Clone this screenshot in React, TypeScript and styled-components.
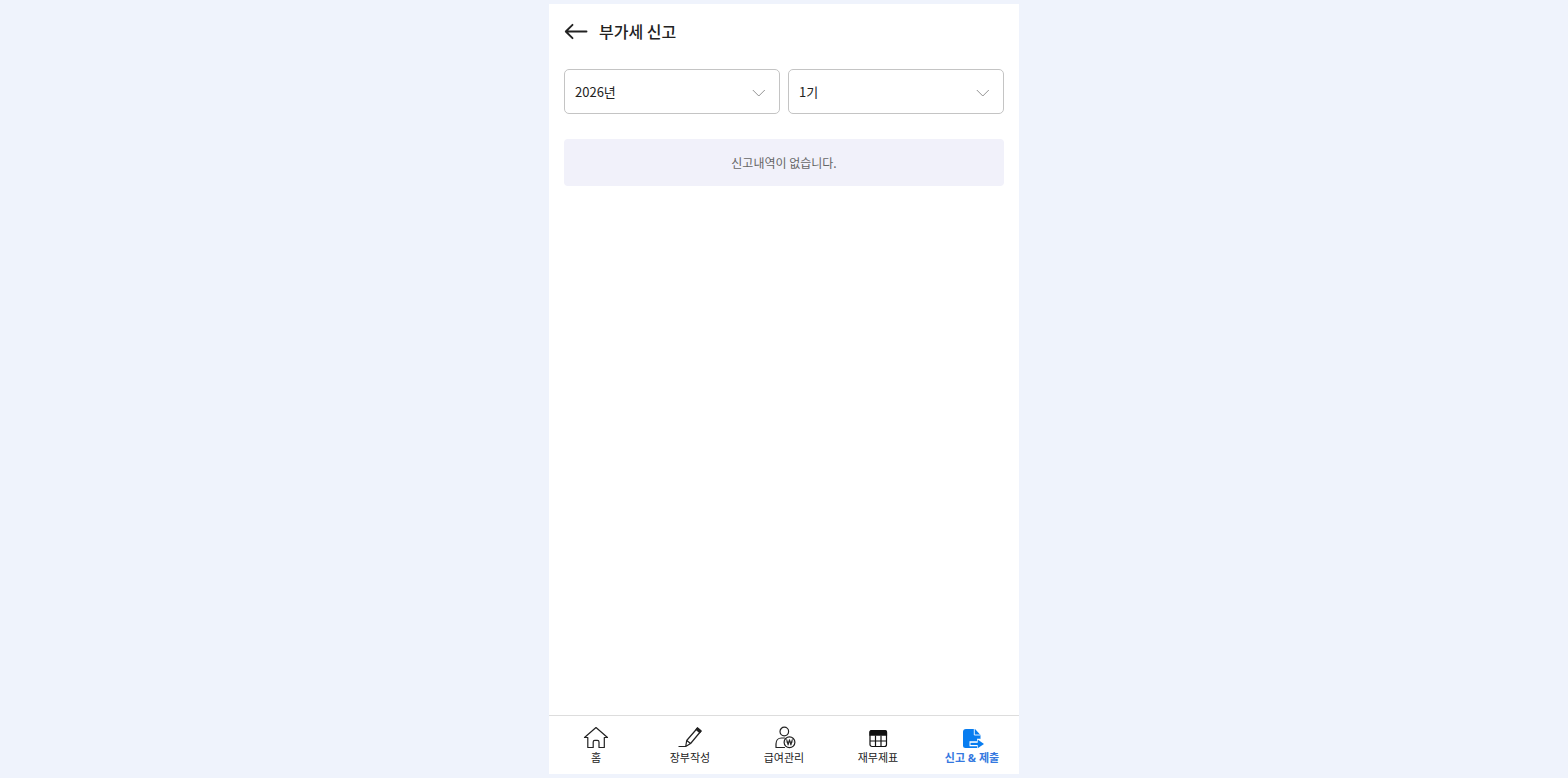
import React, { useState } from "react";
import styled, { createGlobalStyle, css } from "styled-components";

const GlobalStyle = createGlobalStyle`
  *, *::before, *::after { box-sizing: border-box; }
  body {
    margin: 0;
    background: #eff3fc;
    color: #222;
    font-family: "Noto Sans CJK KR", "Noto Sans", sans-serif;
    font-size: 13px;
  }
`;

const Page = styled.div`
  display: flex;
  flex-direction: column;
  min-height: 100vh;
  padding: 4px 0;
`;

const Phone = styled.div`
  display: flex;
  flex: 1;
  flex-direction: column;
  width: 100%;
  max-width: 470px;
  margin: 0 auto;
  background: #fff;
`;

const Header = styled.header`
  display: flex;
  align-items: center;
  gap: 10px;
  height: 54px;
  padding: 0 15px;
`;

const BackButton = styled.button`
  display: flex;
  padding: 0;
  border: 0;
  background: none;
  color: #222;
  cursor: pointer;
`;

const Title = styled.h1`
  margin: 0;
  font-size: 16px;
  font-weight: 500;
  line-height: 24px;
`;

const Content = styled.main`
  flex: 1;
  padding: 11px 15px;
`;

const Filters = styled.div`
  display: flex;
  gap: 8px;
`;

const Field = styled.div`
  display: grid;
  flex: 1;
  align-items: center;

  > * { grid-area: 1 / 1; }

  > svg {
    justify-self: end;
    margin-right: 14px;
    pointer-events: none;
  }
`;

const Select = styled.select`
  appearance: none;
  width: 100%;
  height: 45px;
  padding: 0 10px;
  border: 1px solid #c4c4c4;
  border-radius: 5px;
  background: #fff;
  color: #222;
  font: inherit;
`;

const EmptyMessage = styled.p`
  margin: 25px 0 0;
  padding: 14px;
  border-radius: 4px;
  background: #f1f1fa;
  color: #666;
  font-size: 12px;
  line-height: 19px;
  text-align: center;
`;

const TabBar = styled.nav`
  display: flex;
  height: 59px;
  border-top: 1px solid #ddd;
`;

const Tab = styled.a<{ $active?: boolean }>`
  display: flex;
  flex: 1;
  flex-direction: column;
  align-items: center;
  padding-top: 9px;
  color: #222;
  font-family: "Noto Sans", "Noto Sans CJK KR", sans-serif;
  font-size: 11px;
  line-height: 16px;
  text-decoration: none;

  ${({ $active }) =>
    $active &&
    css`
      color: #3478e0;
      font-weight: 700;
    `}
`;

const BackIcon = () => (
  <svg width="25" height="20" viewBox="0 0 25 20" fill="none" stroke="currentColor" strokeWidth="1.900" strokeLinecap="round" strokeLinejoin="round" aria-hidden="true">
    <path d="M22.500 10.500H2M8.500 3.800 1.800 10.500l6.700 6.700" />
  </svg>
);

const ChevronIcon = () => (
  <svg width="14" height="10" viewBox="0 0 14 10" fill="none" stroke="#888" strokeWidth="0.900" aria-hidden="true">
    <path d="m.8 3 6 6 6-6" />
  </svg>
);

const HomeIcon = () => (
  <svg width="26" height="25" viewBox="0 0 26 25" fill="none" stroke="currentColor" strokeWidth="1.200" strokeLinejoin="round" aria-hidden="true">
    <path d="M13 2.500 1.500 12.500h3.300v10h5.400V17c0-1.100.6-1.700 1.600-1.700h2.600c1 0 1.600.6 1.600 1.700v5.500h5.300v-10h3.200z" />
  </svg>
);

const PencilIcon = () => (
  <svg width="26" height="25" viewBox="0 0 26 25" fill="none" stroke="currentColor" strokeWidth="1.200" strokeLinejoin="round" aria-hidden="true">
    <path d="M1.500 21.500h7.200l1-6L20.500 3l3.500 3-10.400 12.500-4.900 3M9.700 15.500l3.900 3" />
    <path d="m19.200 4.500 3.500 3 1.300-1.500-3.500-3z" fill="currentColor" />
  </svg>
);

const PayrollIcon = () => (
  <svg width="26" height="25" viewBox="0 0 26 25" fill="none" stroke="currentColor" strokeWidth="1.200" strokeLinecap="round" strokeLinejoin="round" aria-hidden="true">
    <circle cx="13.300" cy="6.500" r="4.300" />
    <path d="M13.500 22.500H5V19c0-3.500 2.200-6 5.500-6h3" />
    <circle cx="18.500" cy="17.300" r="5.400" />
    <path d="m15.700 14.700 1.400 5.200 1.400-5.200 1.400 5.200 1.400-5.200" strokeWidth="1.100" />
    <path d="M15 17h7" strokeWidth="0.500" />
  </svg>
);

const TableIcon = () => (
  <svg width="26" height="25" viewBox="0 0 26 25" fill="none" stroke="#111" strokeWidth="1.200" aria-hidden="true">
    <rect x="5" y="5.500" width="16.500" height="16" rx="2" />
    <path d="M4.400 10.800V7c0-1.200.8-2.100 2-2.100H20c1.200 0 2.100.9 2.100 2.100v3.800z" fill="#111" stroke="none" />
    <path d="M5 16h16.500M10.500 10.500v11M16 10.500v11" />
  </svg>
);

const SubmitIcon = () => (
  <svg width="26" height="25" viewBox="0 0 26 25" fill="none" aria-hidden="true">
    <path d="M7 4h9l5.500 6v11a2 2 0 0 1-2 2h-13A2.500 2.500 0 0 1 4 20.500V7a3 3 0 0 1 3-3Z" fill="#087df0" />
    <path d="M15.300 4v6h6.200" stroke="#fff" strokeWidth="0.900" />
    <path d="M10.500 16.200h7.500v-2.400h3.500L26 19l-4.500 4.500H18v-2.200h-7.500z" fill="#fff" />
    <path d="M11.500 18.900h8" stroke="#087df0" strokeWidth="2.200" />
    <path d="m18.700 14.600 6.300 4.300-6.300 4.300z" fill="#087df0" />
  </svg>
);

const tabs = [
  { label: "홈", href: "#home", Icon: HomeIcon },
  { label: "장부작성", href: "#ledger", Icon: PencilIcon },
  { label: "급여관리", href: "#payroll", Icon: PayrollIcon },
  { label: "재무제표", href: "#statements", Icon: TableIcon },
  { label: "신고 & 제출", href: "#filing", Icon: SubmitIcon, active: true },
];

export default function App() {
  const [year, setYear] = useState("2026");
  const [period, setPeriod] = useState("1");

  return (
    <Page>
      <GlobalStyle />
      <Phone>
        <Header>
          <BackButton type="button" aria-label="뒤로">
            <BackIcon />
          </BackButton>
          <Title>부가세 신고</Title>
        </Header>
        <Content>
          <Filters>
            <Field>
              <Select aria-label="연도" value={year} onChange={(e) => setYear(e.target.value)}>
                <option value="2026">2026년</option>
                <option value="2025">2025년</option>
              </Select>
              <ChevronIcon />
            </Field>
            <Field>
              <Select aria-label="기수" value={period} onChange={(e) => setPeriod(e.target.value)}>
                <option value="1">1기</option>
                <option value="2">2기</option>
              </Select>
              <ChevronIcon />
            </Field>
          </Filters>
          <EmptyMessage>신고내역이 없습니다.</EmptyMessage>
        </Content>
        <TabBar aria-label="주요 메뉴">
          {tabs.map(({ label, href, Icon, active }) => (
            <Tab key={href} href={href} $active={active} aria-current={active ? "page" : undefined}>
              <Icon />
              {label}
            </Tab>
          ))}
        </TabBar>
      </Phone>
    </Page>
  );
}
